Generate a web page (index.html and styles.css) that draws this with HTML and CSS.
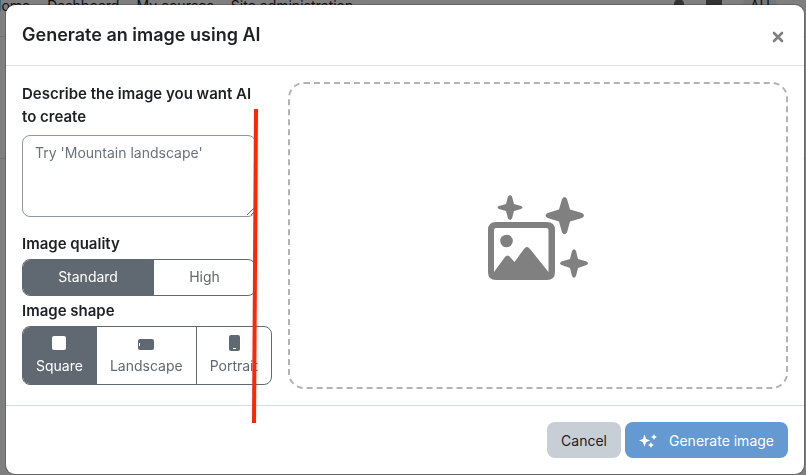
FILE: index.html
```html
<!DOCTYPE html>
<html lang="en">
<head>
  <meta charset="UTF-8" />
  <meta name="viewport" content="width=device-width, initial-scale=1.0"/>
  <title>Generate an image using AI</title>
  <link rel="stylesheet" href="styles.css">
</head>
<body>
  <div class="page">
    <nav class="navbar">
      <a href="#">Home</a>
      <a href="#">Dashboard</a>
      <a href="#">My courses</a>
      <a href="#">Site administration</a>
      <div class="nav-user">
        <svg width="14" height="16" viewBox="0 0 14 16"><path fill="#666" d="M7 0a5 5 0 0 0-5 5v4l-2 3h14l-2-3V5a5 5 0 0 0-5-5z"/></svg>
        <svg width="16" height="16" viewBox="0 0 16 16"><path fill="#666" d="M0 0h16v12H8l-4 4v-4H0z"/></svg>
        <span class="avatar">AU</span>
      </div>
    </nav>
    <div class="page-header"></div>
  </div>

  <div class="backdrop">
    <div class="modal" role="dialog" aria-labelledby="modal-title">
      <div class="modal-header">
        <h1 id="modal-title">Generate an image using AI</h1>
        <button type="button" class="close" aria-label="Close">
          <svg width="12" height="12" viewBox="0 0 12 12"><path d="M2 2l8 8M10 2l-8 8" stroke="#808080" stroke-width="2.6" stroke-linecap="round"/></svg>
        </button>
      </div>

      <div class="modal-body">
        <form class="col-form">
          <label class="form-label prompt-label" for="prompt">Describe the image you want AI to create</label>
          <textarea id="prompt" class="prompt" placeholder="Try 'Mountain landscape'"></textarea>

          <div class="form-label" id="quality-label">Image quality</div>
          <div class="btn-group quality" role="group" aria-labelledby="quality-label">
            <input type="radio" name="quality" id="standard" checked>
            <label for="standard">Standard</label>
            <input type="radio" name="quality" id="high">
            <label for="high">High</label>
          </div>

          <div class="form-label" id="shape-label">Image shape</div>
          <div class="btn-group shape" role="group" aria-labelledby="shape-label">
            <input type="radio" name="shape" id="square" checked>
            <label for="square">
              <svg width="16" height="16" viewBox="0 0 16 16"><rect x="1" y="1" width="14" height="14" rx="2" fill="currentColor"/></svg>
              Square
            </label>
            <input type="radio" name="shape" id="landscape">
            <label for="landscape">
              <svg width="16" height="16" viewBox="0 0 16 16"><rect y="4" width="16" height="11" rx="2" fill="currentColor"/><rect x="1" y="8" width="1" height="3" fill="#fff"/></svg>
              Landscape
            </label>
            <input type="radio" name="shape" id="portrait">
            <label for="portrait">
              <svg width="16" height="16" viewBox="0 0 16 16"><rect x="3" y="0" width="11" height="16" rx="2" fill="currentColor"/><rect x="7" y="13" width="3" height="1" fill="#fff"/></svg>
              Portrait
            </label>
          </div>
        </form>

        <div class="col-preview">
          <div class="preview">
            <svg width="100" height="86" viewBox="0 0 100 86" fill="#808080">
              <path fill-rule="evenodd" d="M8 27H59Q67 27 67 35V77Q67 85 59 85H8Q0 85 0 77V35Q0 27 8 27ZM8 33Q6 33 6 35V77L17 62Q19.500 59 22 62L26.500 67L36 54Q39 50 42 54L60.500 77V35Q60.500 33 58.500 33Z"/>
              <circle cx="18.500" cy="46" r="6.300"/>
              <path d="M20 1.500Q22 -1 24 1.500L26 9L33 11Q36 12.500 33 14L26 16L24 23.500Q22 26 20 23.500L18 16L11 14Q8 12.500 11 11L18 9Z"/>
              <path d="M74 4Q76.500 0 79 4L82 14.500L94 18Q98 20.500 94 23L82 26.500L79 37.500Q76.500 41 74 37.500L71 26.500L59.500 23Q55.500 20.500 59.500 18L71 14.500Z"/>
              <path d="M84 56Q86 52.500 88 56L90 64L98.500 66.500Q101.500 68.500 98.500 70L90 73L88 81Q86 84.500 84 81L82 73L73.500 70Q70.500 68.500 73.500 66.500L82 64Z"/>
            </svg>
          </div>
        </div>
      </div>

      <div class="modal-footer">
        <button type="button" class="btn btn-secondary">Cancel</button>
        <button type="button" class="btn btn-primary">
          <svg width="18" height="16" viewBox="0 0 18 16" fill="#fff">
            <path d="M5.500 2.500L7.200 7L11.200 8.500L7.200 10L5.500 14.500L3.800 10L0 8.500L3.800 7Z"/>
            <path d="M15 2L16 4L18 5L16 6L15 8L14 6L12 5L14 4Z"/>
            <path d="M12 10L13 12L15 13L13 14L12 16L11 14L9 13L11 12Z"/>
          </svg>
          Generate image
        </button>
      </div>

      <svg class="guide" width="8" height="314" viewBox="0 0 8 314"><path d="M5 0L3 314" stroke="#ff2600" stroke-width="4"/></svg>
    </div>
  </div>
</body>
</html>
```
FILE: styles.css
```css
* {
  box-sizing: border-box;
}
html, body {
  margin: 0;
  height: 100%;
  overflow: hidden;
  font-family: Inter, "Liberation Sans", sans-serif;
  font-size: 14px;
  line-height: 23px;
  color: #1d2125;
  background: #fff;
}
.navbar {
  display: flex;
  gap: 17px;
  height: 43px;
  margin: -6px 0 0 -9px;
  padding-right: 28px;
  border-bottom: 1px solid #dee2e6;
}
.navbar a {
  color: #1d2125;
  text-decoration: none;
}
.nav-user {
  display: flex;
  gap: 20px;
  margin-left: auto;
  padding-top: 5px;
}
.avatar {
  width: 36px;
  height: 36px;
  margin-top: -8px;
  padding-top: 3px;
  border-radius: 50%;
  background: #e9ecef;
  text-align: center;
}
.page-header {
  height: 122px;
  border-bottom: 1px solid #dee2e6;
}

.backdrop {
  position: fixed;
  inset: 0;
  padding: 5px 2px 1px 6px;
  background: rgba(0, 0, 0, 0.5);
}
.modal {
  position: relative;
  display: flex;
  flex-direction: column;
  background: #fff;
  border-radius: 9px;
  box-shadow: 0 0 0 1px rgba(0, 0, 0, 0.2);
}
.modal-header {
  display: flex;
  justify-content: space-between;
  padding: 16px;
  border-bottom: 1px solid #dee2e6;
}
.modal-header h1 {
  margin: 0;
  font-size: 18px;
  line-height: 28px;
  font-weight: 600;
}
.close {
  display: flex;
  align-items: center;
  padding: 4px 4px 0;
  border: none;
  background: none;
  cursor: pointer;
}

.modal-body {
  display: flex;
  padding: 16px 0;
}
.col-form,
.col-preview {
  padding: 0 16px;
}
.col-form {
  width: 33.333%;
}
.col-preview {
  display: flex;
  width: 66.667%;
}
.form-label {
  display: block;
  margin-bottom: 4px;
  font-size: 15px;
  font-weight: 600;
}
.prompt-label {
  margin-bottom: 7px;
}
.prompt {
  display: block;
  width: 100%;
  height: 82px;
  margin-bottom: 15px;
  padding: 5px 12px;
  border: 1px solid #8f959e;
  border-radius: 8px;
  font: inherit;
}
.prompt::placeholder {
  color: #6a737b;
}
.btn-group {
  display: flex;
  border: 1px solid #606972;
  border-radius: 8px;
  overflow: hidden;
}
.btn-group input {
  position: absolute;
  opacity: 0;
}
.btn-group label {
  padding: 5px 13px 7px;
  color: #606972;
  text-align: center;
  cursor: pointer;
}
.btn-group label + input + label {
  border-left: 1px solid #606972;
}
.btn-group input:checked + label {
  background: #606972;
  color: #fff;
}
.quality {
  margin-bottom: 3px;
}
.quality label {
  flex: 1 1 auto;
}
.shape {
  width: max-content;
}
.shape svg {
  display: block;
  margin: 3px auto;
}
.preview {
  display: flex;
  flex: 1;
  align-items: center;
  justify-content: center;
  min-height: 307px;
  padding-top: 4px;
  border: 2px dashed #b3b3b3;
  border-radius: 16px;
}

.modal-footer {
  display: flex;
  justify-content: flex-end;
  gap: 4px;
  padding: 16px;
  border-top: 1px solid #d3dce4;
}
.btn {
  display: flex;
  align-items: center;
  height: 36px;
  padding: 0 14px;
  border: none;
  border-radius: 8px;
  font: inherit;
  cursor: pointer;
}
.btn-secondary {
  background: #c8ced6;
  color: #1d2125;
}
.btn-primary {
  gap: 12px;
  background: #6499d2;
  color: #fff;
}
.guide {
  position: absolute;
  top: 104px;
  left: 245px;
  pointer-events: none;
}
```
